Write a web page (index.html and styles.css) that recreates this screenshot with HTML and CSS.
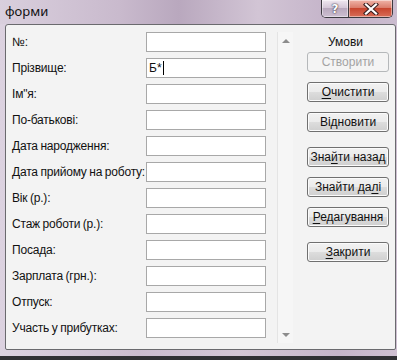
FILE: index.html
```html
<!DOCTYPE html>
<html lang="uk">
<head>
  <meta charset="UTF-8">
  <meta name="viewport" content="width=device-width, initial-scale=1.0">
  <title>форми</title>
  <link rel="stylesheet" href="styles.css">
</head>
<body>
  <div class="window">
    <div class="titlebar">
      <span class="title">форми</span>
      <div class="caption-buttons">
        <button class="cap cap-help">?</button>
        <button class="cap cap-close">
          <svg width="16" height="12" viewBox="0 0 16 12">
            <path d="M3 1.5 L13 10.5 M13 1.5 L3 10.5" stroke="#3a2020" stroke-width="4.2" stroke-linecap="square"/>
            <path d="M3 1.5 L13 10.5 M13 1.5 L3 10.5" stroke="#ffffff" stroke-width="2.2" stroke-linecap="square"/>
          </svg>
        </button>
      </div>
    </div>

    <div class="client">
      <div class="fields">
        <label>№:</label><div class="field"></div>
        <label>Прізвище:</label><div class="field">Б*<span class="caret"></span></div>
        <label>Ім"я:</label><div class="field"></div>
        <label>По-батькові:</label><div class="field"></div>
        <label>Дата народження:</label><div class="field"></div>
        <label>Дата прийому на роботу:</label><div class="field"></div>
        <label>Вік (р.):</label><div class="field"></div>
        <label>Стаж роботи (р.):</label><div class="field"></div>
        <label>Посада:</label><div class="field"></div>
        <label>Зарплата (грн.):</label><div class="field"></div>
        <label>Отпуск:</label><div class="field"></div>
        <label>Участь у прибутках:</label><div class="field"></div>
      </div>

      <div class="scrollbar">
        <span class="arrow arrow-up"></span>
        <span class="arrow arrow-down"></span>
      </div>

      <div class="actions">
        <div class="cond">Умови</div>
        <button class="btn first" disabled>Створити</button>
        <button class="btn"><u>О</u>чистити</button>
        <button class="btn">Відновити</button>
        <button class="btn sep">Зна<u>й</u>ти назад</button>
        <button class="btn">Знайти да<u>л</u>і</button>
        <button class="btn"><u>Р</u>едагування</button>
        <button class="btn sep"><u>З</u>акрити</button>
      </div>
    </div>

    <div class="below"></div>
  </div>
</body>
</html>
```

FILE: styles.css
```css
body {
  margin: 0;
  padding: 0;
  font-family: "Liberation Sans", Arial, sans-serif;
  font-size: 12px;
  color: #111;
  overflow: hidden;
}

.window {
  width: 397px;
  height: 360px;
  display: flex;
  flex-direction: column;
  background: linear-gradient(90deg, #dcd2e0 0%, #cbbccf 35%, #d3c6d6 60%, #c6b5ca 85%, #cfc0d2 100%);
}

/* title bar */
.titlebar {
  height: 24px;
  display: flex;
  justify-content: space-between;
  align-items: flex-start;
  padding: 0 4px 0 5px;
  background: linear-gradient(90deg, #d9cfdd 0%, #c9bacd 30%, #b9a8be 45%, #d2c5d5 65%, #c3b2c8 85%, #cbbccf 100%);
}

.title {
  font-family: "Noto Sans", sans-serif;
  font-size: 13px;
  line-height: 20px;
  padding-top: 1px;
  color: #111;
}

.caption-buttons {
  display: flex;
  border: 1px solid #3c3a40;
  border-top: none;
  border-radius: 0 0 5px 5px;
  overflow: hidden;
}

.cap {
  height: 17px;
  margin: 0;
  padding: 0;
  border: none;
  display: flex;
  align-items: center;
  justify-content: center;
  box-shadow: inset 0 0 0 1px rgba(255, 255, 255, 0.45);
}

.cap-help {
  width: 27px;
  font-family: "DejaVu Sans", sans-serif;
  font-weight: bold;
  font-size: 12px;
  color: #fff;
  text-shadow: 0 0 2px #3a3040, 0 0 1px #3a3040;
  border-right: 1px solid #3c3a40;
  background: linear-gradient(#efe8f0 0%, #d5c8d8 45%, #b9a9be 50%, #cdbfd1 100%);
}

.cap-close {
  width: 43px;
  background: linear-gradient(#f0b4a8 0%, #db7d6c 45%, #c8452e 50%, #d86d58 100%);
}

/* dialog body */
.client {
  width: 391px;
  height: 326px;
  margin-left: 5px;
  box-sizing: border-box;
  border: 1px solid #6a6a6e;
  border-radius: 3px 3px 2px 2px;
  background-color: #f3f3f3;
  display: flex;
  align-items: flex-start;
  padding: 7px 0 0 6px;
}

.fields {
  display: grid;
  grid-template-columns: 134px 120px;
  grid-auto-rows: 20px;
  row-gap: 6px;
}

.fields label {
  display: flex;
  align-items: center;
  white-space: nowrap;
  letter-spacing: -0.2px;
  word-spacing: -0.5px;
}

.field {
  box-sizing: border-box;
  height: 20px;
  border: 1px solid #a8a8a8;
  background-color: #fff;
  padding: 0 2px;
  line-height: 18px;
  display: flex;
  align-items: center;
}

.caret {
  display: inline-block;
  width: 1px;
  height: 14px;
  background-color: #000;
  margin-left: 1px;
}

.scrollbar {
  width: 16px;
  height: 311px;
  margin-left: 11px;
  box-sizing: border-box;
  border-left: 1px solid #e4e4e4;
  background-color: #f6f6f6;
  display: flex;
  flex-direction: column;
  align-items: center;
  justify-content: space-between;
  padding: 7px 0 6px;
}

.arrow {
  width: 0;
  height: 0;
  border-left: 4px solid transparent;
  border-right: 4px solid transparent;
}

.arrow-up {
  border-bottom: 4px solid #8c8c8c;
}

.arrow-down {
  border-top: 4px solid #8c8c8c;
}

.actions {
  width: 82px;
  margin-left: 14px;
  display: flex;
  flex-direction: column;
}

.cond {
  height: 20px;
  line-height: 20px;
  text-align: center;
  padding-right: 5px;
}

.btn {
  height: 20px;
  margin: 10px 0 0;
  padding: 0;
  font-family: inherit;
  font-size: 12px;
  color: #111;
  border: 1px solid #707070;
  border-radius: 3px;
  background: linear-gradient(#f2f2f2 0%, #ebebeb 50%, #dddddd 50%, #cfcfcf 100%);
  box-shadow: inset 0 0 0 1px #fbfbfb;
}

.btn.first {
  margin-top: 0;
}

.btn.sep {
  margin-top: 15px;
}

.btn:disabled {
  color: #a3a3a3;
  border-color: #b5b8ba;
  background: #f4f4f4;
  box-shadow: none;
}

.btn u {
  text-underline-offset: 2px;
}

.below {
  height: 4px;
  margin-top: 6px;
  background-color: #303034;
}
```
